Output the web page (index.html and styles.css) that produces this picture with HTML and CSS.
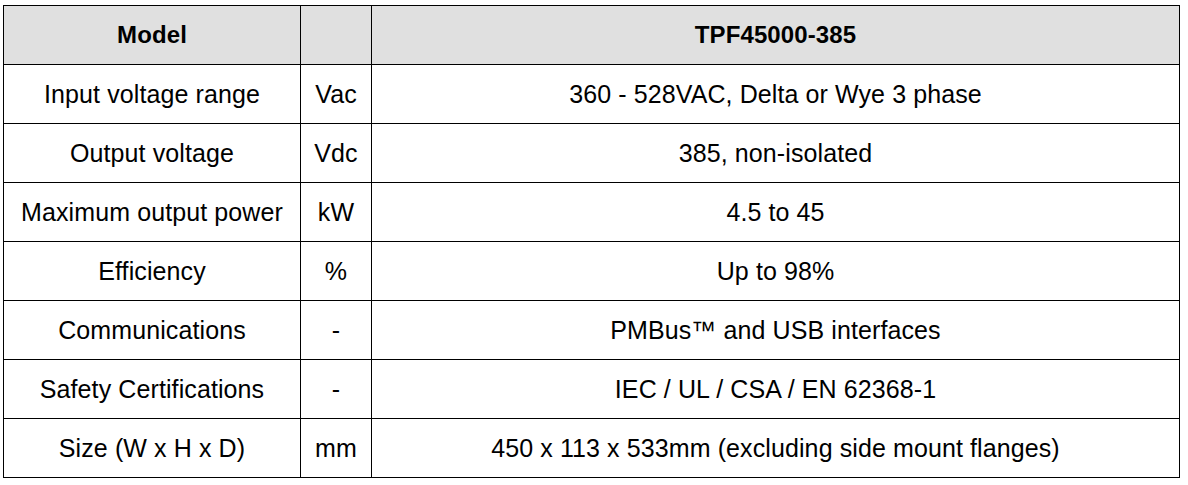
FILE: index.html
```html
<!DOCTYPE html>
<html>
<head>
<meta charset="utf-8">
<link rel="stylesheet" href="styles.css">
</head>
<body>
<table class="spec">
  <colgroup>
    <col class="c-name">
    <col class="c-unit">
    <col class="c-val">
  </colgroup>
  <thead>
    <tr class="head">
      <th>Model</th>
      <th></th>
      <th>TPF45000-385</th>
    </tr>
  </thead>
  <tbody>
    <tr><td>Input voltage range</td><td>Vac</td><td>360 - 528VAC, Delta or Wye 3 phase</td></tr>
    <tr><td>Output voltage</td><td>Vdc</td><td>385, non-isolated</td></tr>
    <tr><td>Maximum output power</td><td>kW</td><td>4.5 to 45</td></tr>
    <tr><td>Efficiency</td><td>%</td><td>Up to 98%</td></tr>
    <tr><td>Communications</td><td>-</td><td>PMBus™ and USB interfaces</td></tr>
    <tr><td>Safety Certifications</td><td>-</td><td>IEC / UL / CSA / EN 62368-1</td></tr>
    <tr><td>Size (W x H x D)</td><td>mm</td><td>450 x 113 x 533mm (excluding side mount flanges)</td></tr>
  </tbody>
</table>
</body>
</html>
```
FILE: styles.css
```css
html, body {
  margin: 0;
  padding: 0;
  background: #ffffff;
}
body {
  padding: 5px 0 0 3px;
  font-family: "Liberation Sans", Arial, sans-serif;
  color: #000;
}
.spec {
  border-collapse: collapse;
  width: 1176px;
  table-layout: fixed;
  font-size: 25px;
  letter-spacing: 0.1px;
}
.c-name { width: 297px; }
.c-unit { width: 71px; }
.c-val { width: 808px; }
.spec th, .spec td {
  border: 1px solid #000;
  height: 59px;
  padding: 0;
  text-align: center;
  vertical-align: middle;
  box-sizing: border-box;
}
.spec th {
  font-weight: bold;
  font-size: 24px;
}
.head th {
  background: #e0e0e0;
}
```
